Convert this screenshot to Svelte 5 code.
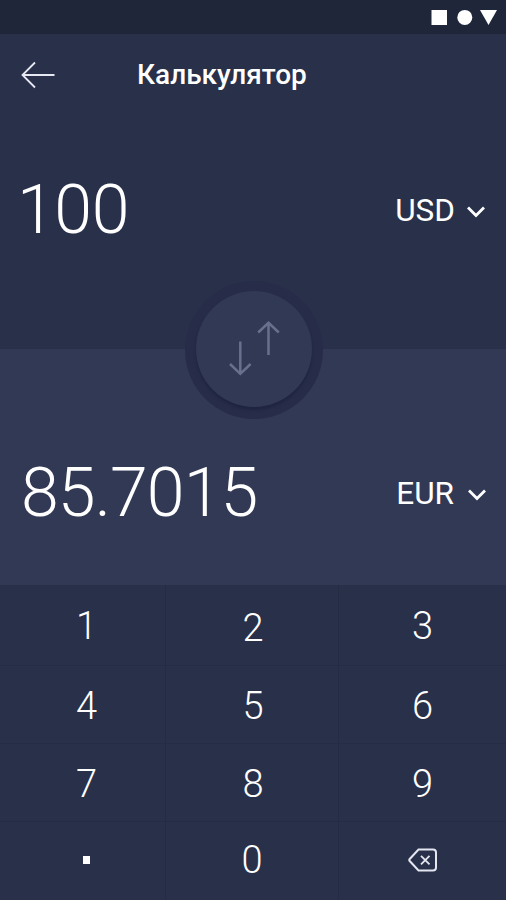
<script lang="ts">
	interface Key {
		label: string;
		kind?: 'dot' | 'erase';
	}

	const keys: Key[] = [
		{ label: '1' },
		{ label: '2' },
		{ label: '3' },
		{ label: '4' },
		{ label: '5' },
		{ label: '6' },
		{ label: '7' },
		{ label: '8' },
		{ label: '9' },
		{ label: '.', kind: 'dot' },
		{ label: '0' },
		{ label: 'erase', kind: 'erase' }
	];

	let amount = '100';
	let rate = 0.857015;
	let from = 'USD';
	let to = 'EUR';

	$: result = String(Number((Number(amount) * rate).toFixed(4)));

	function press(key: Key) {
		if (key.kind === 'erase') {
			amount = amount.slice(0, -1) || '0';
		} else if (key.kind === 'dot') {
			if (!amount.includes('.')) amount += '.';
		} else if (amount.length < 7) {
			amount = amount === '0' ? key.label : amount + key.label;
		}
	}

	function swap() {
		[from, to] = [to, from];
		rate = 1 / rate;
	}
</script>

<div class="screen">
	<div class="status-bar">
		<svg width="66" height="16" viewBox="0 0 66 16" fill="#fff">
			<rect x="0.5" y="1" width="15.5" height="15" />
			<circle cx="33.8" cy="8.4" r="7.5" />
			<path d="M49 1h17l-8.5 15z" />
		</svg>
	</div>

	<section class="panel source">
		<header>
			<button class="back" aria-label="Назад">
				<svg width="34" height="28" viewBox="0 0 34 28" fill="none" stroke="#e6e8f2" stroke-width="1.8">
					<path d="M33.5 14H1.5M14 1.5L1.5 14 14 26.5" />
				</svg>
			</button>
			<h1>Калькулятор</h1>
		</header>
		<div class="row">
			<span class="value">{amount}</span>
			<button class="currency">
				{from}
				<svg width="20" height="14" viewBox="0 0 20 14" fill="none" stroke="#fff" stroke-width="2.8">
					<path d="M2 2.5L10 10.5 18 2.5" />
				</svg>
			</button>
		</div>
	</section>

	<section class="panel target">
		<button class="swap" aria-label="Поменять валюты" on:click={swap}>
			<span class="disc">
				<svg width="52" height="56" viewBox="0 0 52 56" fill="none" stroke="#69708d" stroke-width="2.5">
					<path d="M12.3 21.5V53M2 44L12.3 53.8 22.6 44" />
					<path d="M40.5 35V3M30.2 12.5L40.5 2.8 50.8 12.5" />
				</svg>
			</span>
		</button>
		<div class="row">
			<span class="value">{result}</span>
			<button class="currency">
				{to}
				<svg width="20" height="14" viewBox="0 0 20 14" fill="none" stroke="#fff" stroke-width="2.8">
					<path d="M2 2.5L10 10.5 18 2.5" />
				</svg>
			</button>
		</div>
	</section>

	<div class="keypad">
		{#each keys as key (key.label)}
			<button class="key" aria-label={key.label} on:click={() => press(key)}>
				{#if key.kind === 'dot'}
					<span class="dot"></span>
				{:else if key.kind === 'erase'}
					<svg width="30" height="24" viewBox="0 0 30 24" fill="none" stroke="#e4e7f0" stroke-width="2">
						<path d="M10.5 1.5H25Q28 1.5 28 4.5V19.5Q28 22.5 25 22.5H10.5L1.5 12.8Q1 12 1.5 11.2Z" />
						<path d="M13 7.8L21.5 16.3M21.5 7.8L13 16.3" stroke-width="1.8" />
					</svg>
				{:else}
					{key.label}
				{/if}
			</button>
		{/each}
	</div>
</div>

<style>
	:global(body) {
		margin: 0;
		background: #29304a;
	}

	.screen {
		display: flex;
		flex-direction: column;
		width: 506px;
		height: 900px;
		overflow: hidden;
		font-family: Roboto, 'Noto Sans', sans-serif;
		color: #fff;
		background: #29304a;
	}

	button {
		margin: 0;
		padding: 0;
		border: 0;
		background: none;
		font: inherit;
		color: inherit;
	}

	svg {
		display: block;
	}

	.status-bar {
		display: flex;
		justify-content: flex-end;
		box-sizing: border-box;
		height: 34px;
		padding: 9px 9px 0 0;
		background: #20263a;
	}

	.panel {
		box-sizing: border-box;
		padding: 0 20px 0 17px;
	}

	.source {
		height: 315px;
	}

	.target {
		position: relative;
		height: 236px;
		padding: 109px 19px 0 21px;
		background: #323954;
	}

	header {
		display: flex;
		align-items: center;
		height: 82px;
	}

	.back {
		width: 34px;
		margin-left: 4px;
	}

	h1 {
		margin: 0 0 0 82px;
		font-size: 28px;
		font-weight: 500;
		line-height: 32px;
	}

	.row {
		display: flex;
		align-items: center;
		justify-content: space-between;
		height: 70px;
	}

	.source .row {
		margin-top: 59px;
	}

	.value {
		font-size: 68px;
		font-weight: 300;
		line-height: 70px;
		letter-spacing: -0.9px;
	}

	.source .value {
		letter-spacing: -0.4px;
	}

	.currency {
		display: flex;
		align-items: center;
		gap: 11px;
		margin-top: 2px;
		font-size: 31.5px;
		line-height: 36px;
	}

	.currency svg {
		margin-top: 2px;
	}

	.target .currency {
		gap: 13px;
	}

	/* sits on the seam between the two panels */
	.swap {
		position: absolute;
		top: -68px;
		left: 185px;
		display: grid;
		place-items: center;
		width: 138px;
		height: 138px;
		border-radius: 50%;
		background: #272d49;
	}

	.disc {
		display: grid;
		place-items: center;
		width: 116px;
		height: 116px;
		margin-bottom: 2px;
		border-radius: 50%;
		background: #323954;
		box-shadow: 0 3px 3px #1f2540;
	}

	.disc svg {
		margin-bottom: 2px;
	}

	.keypad {
		display: grid;
		grid-template-columns: 166px 173px 167px;
		grid-template-rows: 81px 78px 78px 78px;
	}

	.key {
		display: flex;
		align-items: center;
		justify-content: center;
		box-sizing: border-box;
		border-right: 1px solid #252b43;
		border-bottom: 1px solid #262c44;
		padding-top: 2px;
		font-size: 38px;
		font-weight: 300;
		line-height: 44px;
		color: #fff;
	}

	.key:nth-child(3n + 1) {
		padding-left: 8px;
	}

	.key:nth-child(3n + 2) {
		padding-left: 2px;
	}

	.key:nth-child(2) {
		padding-top: 6px;
	}

	.key:nth-child(3n) {
		border-right: 0;
	}

	.key:nth-last-child(-n + 3) {
		padding: 0 0 3px;
		border-bottom: 0;
	}

	.key:nth-child(10) {
		padding-left: 8px;
	}

	.dot {
		width: 7px;
		height: 8px;
		background: #fff;
	}
</style>
